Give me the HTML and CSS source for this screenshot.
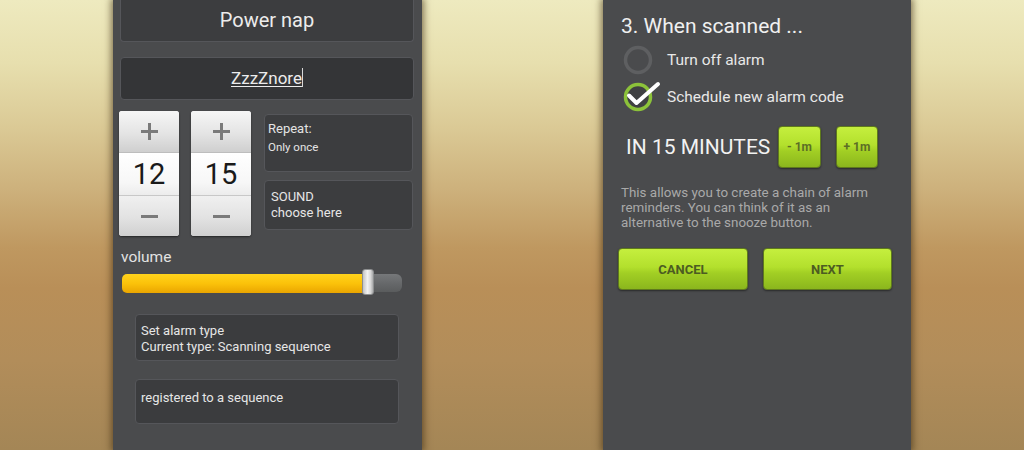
FILE: index.html
```html
<!DOCTYPE html>
<html>
<head>
<meta charset="utf-8">
<link rel="stylesheet" href="styles.css">
</head>
<body>
<div class="stage">
  <section class="panel left">
    <div class="box box-top">Power nap</div>
    <div class="box box-input"><span class="typed">ZzzZnore</span><span class="cursor"></span></div>
    <div class="time-row">
      <div class="picker">
        <div class="pk-btn"><span class="plus"></span></div>
        <div class="pk-num">12</div>
        <div class="pk-btn pk-bottom"><span class="minus"></span></div>
      </div>
      <div class="picker picker-2">
        <div class="pk-btn"><span class="plus"></span></div>
        <div class="pk-num">15</div>
        <div class="pk-btn pk-bottom"><span class="minus"></span></div>
      </div>
      <div class="side-col">
        <div class="box box-repeat"><div class="rp-1">Repeat:</div><div class="rp-2">Only once</div></div>
        <div class="box box-sound"><div>SOUND</div><div>choose here</div></div>
      </div>
    </div>
    <div class="volume-label">volume</div>
    <div class="slider">
      <div class="fill"></div>
      <div class="rest"></div>
      <div class="thumb"></div>
    </div>
    <div class="box box-wide box-type"><div>Set alarm type</div><div>Current type: Scanning sequence</div></div>
    <div class="box box-wide box-reg"><div>registered to a sequence</div></div>
  </section>

  <section class="panel right">
    <div class="title">3. When scanned ...</div>
    <div class="opt">
      <svg class="radio" width="30" height="30" viewBox="0 0 30 30">
        <circle cx="15" cy="15" r="12.5" fill="none" stroke="#5e5f61" stroke-width="3.5"/>
      </svg>
      <span class="opt-text">Turn off alarm</span>
    </div>
    <div class="opt">
      <svg class="radio" width="30" height="30" viewBox="0 0 30 30">
        <circle cx="15" cy="15" r="12.5" fill="#3f4042" stroke="#8cc23a" stroke-width="3.5"/>
        <path d="M6 13.5 L13.5 21 L35 2" fill="none" stroke="#ffffff" stroke-width="4" stroke-linecap="round" stroke-linejoin="round"/>
      </svg>
      <span class="opt-text">Schedule new alarm code</span>
    </div>
    <div class="min-row">
      <span class="min-text">IN 15 MINUTES</span>
      <div class="gbtn small">- 1m</div>
      <div class="gbtn small small-2">+ 1m</div>
    </div>
    <p class="info">This allows you to create a chain of alarm<br>reminders. You can think of it as an<br>alternative to the snooze button.</p>
    <div class="actions">
      <div class="gbtn big">CANCEL</div>
      <div class="gbtn big big-2">NEXT</div>
    </div>
  </section>
</div>
</body>
</html>
```
FILE: styles.css
```css
html, body {
  margin: 0;
  padding: 0;
}
body {
  width: 1024px;
  height: 450px;
  overflow: hidden;
  font-family: Roboto, "Liberation Sans", sans-serif;
  background: linear-gradient(to bottom,
    #eeeabf 0%, #e7dfae 14%, #dbca96 28%, #cdb17c 42%,
    #bf9860 55%, #b98f58 64%, #b28d5a 80%, #a48656 100%);
}
.stage {
  display: flex;
  padding-left: 113px;
  gap: 181px;
  height: 450px;
}
.panel {
  background: #4a4b4d;
  height: 450px;
  box-sizing: border-box;
  box-shadow: 0 0 7px 2px rgba(60, 42, 15, 0.6);
}
.left {
  width: 309px;
  padding: 0 8px 0 7px;
}
.right {
  width: 308px;
  padding-top: 14px;
}

/* generic dark box */
.box {
  box-sizing: border-box;
  background: #3c3d3f;
  border: 1px solid #55565a;
  border-radius: 4px;
  color: #e6e6e6;
}
.box-top {
  height: 42px;
  border-top: none;
  border-radius: 0 0 4px 4px;
  text-align: center;
  font-size: 20px;
  line-height: 40px;
  color: #ececec;
}
.box-input {
  margin-top: 15px;
  height: 43px;
  background: #343537;
  text-align: center;
  font-size: 17px;
  line-height: 40px;
  color: #ececec;
}
.typed {
  text-decoration: underline;
  text-underline-offset: 2px;
}
.cursor {
  display: inline-block;
  width: 1px;
  height: 19px;
  background: #d8d8d8;
  vertical-align: -3px;
}

/* time pickers row */
.time-row {
  display: flex;
  align-items: flex-start;
  margin-top: 11px;
  margin-left: -1px;
}
.picker {
  width: 60px;
  height: 125px;
  display: flex;
  flex-direction: column;
  border-radius: 3px;
  overflow: hidden;
  background: #f4f4f4;
  box-shadow: 0 1px 2px rgba(0,0,0,0.5);
}
.picker-2 {
  margin-left: 12px;
}
.pk-btn {
  height: 41px;
  display: flex;
  align-items: center;
  justify-content: center;
  background: linear-gradient(to bottom, #f6f6f6 0%, #e4e4e4 55%, #cfcfcf 100%);
  border-bottom: 1px solid #bdbdbd;
}
.pk-bottom {
  height: 40px;
  border-bottom: none;
  border-top: 1px solid #c8c8c8;
  background: linear-gradient(to bottom, #f0f0f0 0%, #e2e2e2 55%, #d0d0d0 100%);
}
.pk-num {
  flex: 1;
  display: flex;
  align-items: center;
  justify-content: center;
  font-size: 29px;
  color: #1a1a1a;
  background: linear-gradient(to bottom, #ffffff 0%, #f7f7f7 70%, #ececec 100%);
}
.plus, .minus {
  position: relative;
  width: 17px;
  height: 17px;
  display: block;
}
.plus::before, .minus::before {
  content: "";
  position: absolute;
  left: 0;
  top: 7px;
  width: 17px;
  height: 3px;
  background: #7a7a7a;
}
.plus::after {
  content: "";
  position: absolute;
  left: 7px;
  top: 0;
  width: 3px;
  height: 17px;
  background: #7a7a7a;
}
.side-col {
  display: flex;
  flex-direction: column;
  gap: 8px;
  margin-left: 13px;
  margin-top: 3px;
  width: 149px;
}
.box-repeat {
  height: 58px;
  padding: 5px 0 0 3px;
  color: #e4e4e4;
}
.rp-1 {
  font-size: 13px;
  line-height: 18px;
}
.rp-2 {
  font-size: 11.5px;
  line-height: 18px;
}
.box-sound {
  height: 50px;
  padding: 8px 0 0 6px;
  font-size: 13px;
  line-height: 16px;
}

/* volume */
.volume-label {
  margin-top: 12px;
  padding-left: 1px;
  font-size: 15.5px;
  line-height: 19px;
  color: #e2e2e2;
}
.slider {
  position: relative;
  display: flex;
  align-items: center;
  margin: 5px 12px 0 2px;
  height: 22px;
}
.fill {
  flex: 0 0 246px;
  height: 19px;
  border-radius: 5px 0 0 5px;
  background: linear-gradient(to bottom, #ffd31c 0%, #fbc20a 50%, #eaa500 100%);
}
.rest {
  flex: 1;
  height: 18px;
  border-radius: 0 6px 6px 0;
  background: linear-gradient(to bottom, #76787a 0%, #67696b 50%, #5a5c5d 100%);
}
.thumb {
  position: absolute;
  left: 240px;
  top: -3px;
  width: 12px;
  height: 26px;
  box-sizing: border-box;
  border-radius: 3px;
  border: 1px solid #8d8f90;
  background: linear-gradient(to right, #c4c4c4 0%, #f2f2f2 45%, #d8d8d8 75%, #a9aaab 100%);
}

/* wide boxes */
.box-wide {
  margin-left: 15px;
  margin-right: 15px;
  font-size: 13px;
  line-height: 16px;
  color: #e6e6e6;
  padding-left: 5px;
  background: #3b3c3e;
}
.box-type {
  margin-top: 20px;
  height: 47px;
  padding-top: 8px;
}
.box-reg {
  margin-top: 18px;
  height: 45px;
  padding-top: 10px;
}

/* right panel */
.title {
  margin-left: 18px;
  font-size: 21px;
  line-height: 24px;
  color: #f0f0f0;
}
.opt {
  display: flex;
  align-items: center;
  height: 30px;
  margin-top: 7px;
  margin-left: 20px;
}
.radio {
  flex: none;
  overflow: visible;
}
.opt-text {
  margin-left: 14px;
  font-size: 15.5px;
  color: #e8e8e8;
}
.min-row {
  display: flex;
  align-items: center;
  margin-top: 14px;
  margin-left: 23px;
  height: 42px;
}
.min-text {
  flex: 0 0 152px;
  font-size: 21px;
  color: #f2f2f2;
  white-space: nowrap;
}
.gbtn {
  box-sizing: border-box;
  display: flex;
  align-items: center;
  justify-content: center;
  border-radius: 4px;
  border: 1px solid #5f7a1c;
  background: linear-gradient(to bottom, #c5ef3e 0%, #b3e02d 45%, #a2cf24 60%, #8bb61d 100%);
  color: #4c5c22;
  font-weight: bold;
  box-shadow: 0 1px 2px rgba(0,0,0,0.45);
}
.small {
  width: 43px;
  height: 42px;
  font-size: 12px;
  font-weight: bold;
  color: #5c6e26;
}
.small-2 {
  width: 42px;
  margin-left: 15px;
}
.info {
  margin: 17px 0 0 18px;
  font-size: 13.4px;
  line-height: 15px;
  color: #a9a9a9;
}
.actions {
  display: flex;
  gap: 15px;
  margin: 18px 0 0 15px;
}
.big {
  width: 130px;
  height: 42px;
  font-size: 13px;
}
.big-2 {
  width: 129px;
}
```
